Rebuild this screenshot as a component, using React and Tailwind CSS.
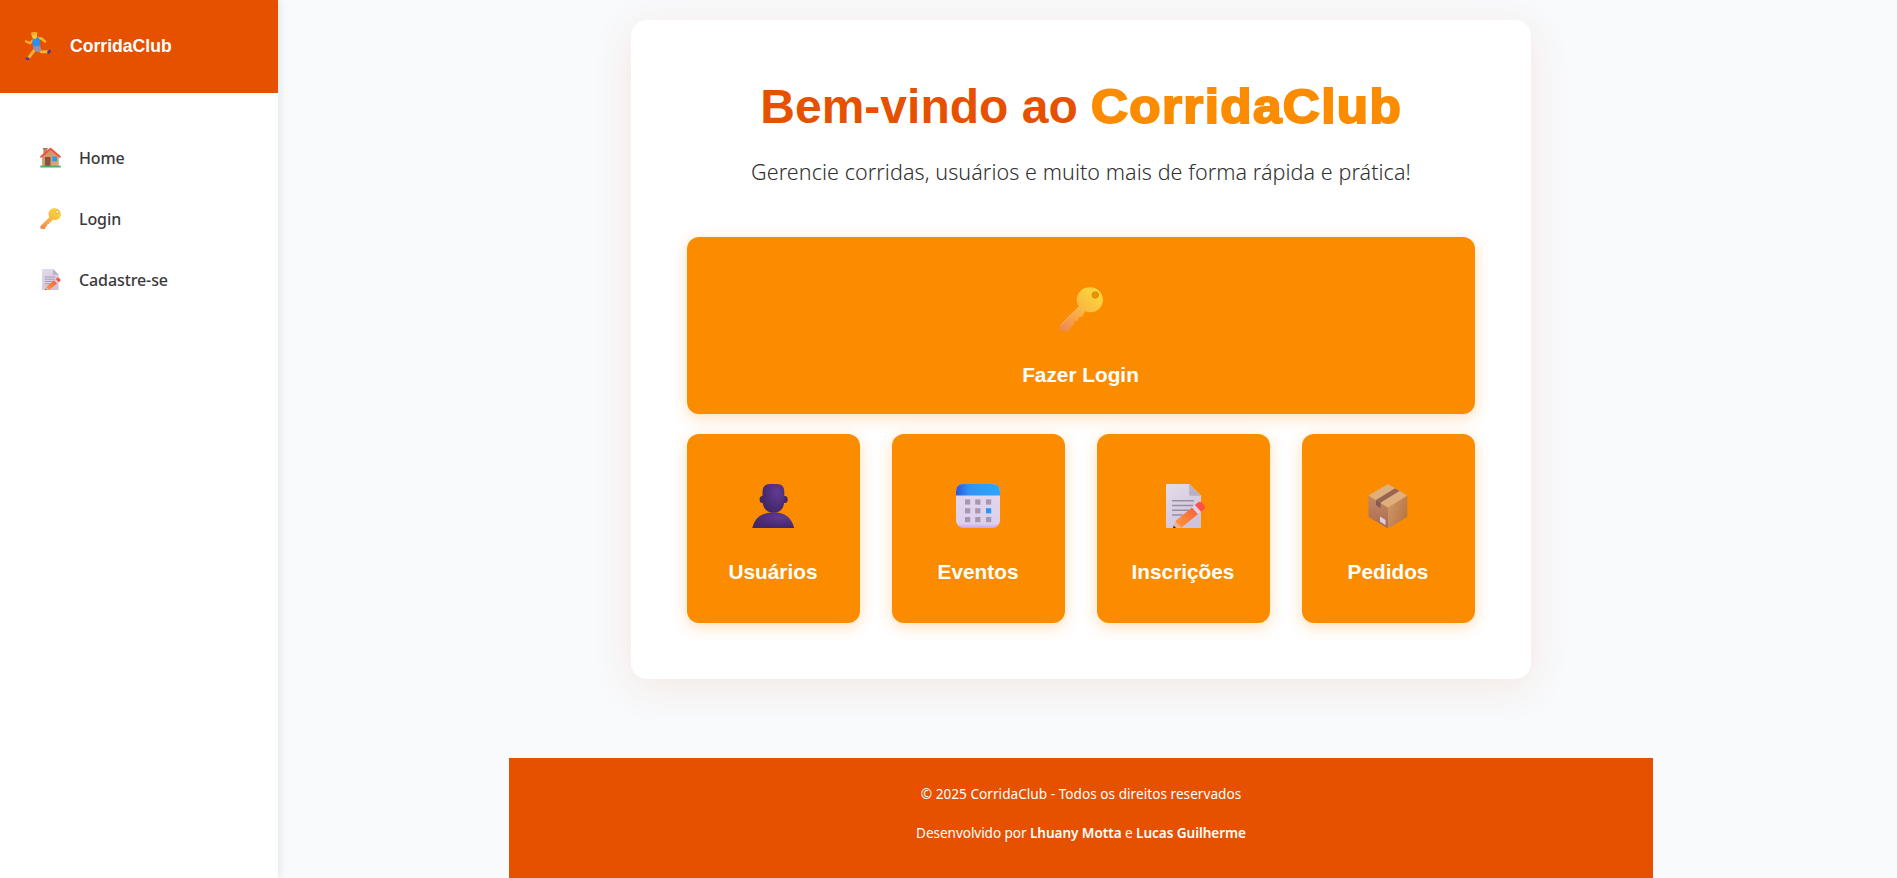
import React from "react";

function KeyIcon({ className, id }) {
  return (
    <svg viewBox="0 0 44 44" className={className} aria-hidden="true">
      <defs>
        <linearGradient id={id} x1="34" y1="8" x2="4" y2="42" gradientUnits="userSpaceOnUse">
          <stop offset="0" stopColor="#fbd03c" />
          <stop offset="0.5" stopColor="#f9b044" />
          <stop offset="1" stopColor="#f08a52" />
        </linearGradient>
      </defs>
      <path
        fillRule="evenodd"
        fill={`url(#${id})`}
        d="M31.500 0.300a12.500 12.500 0 1 1 -5.200 23.900l-3.300 5.600l-3.400 0.700l-0.500 3l-3.400 0.800l-1.300 3.800l-2 1l-1.200 3.200a5 5 0 0 1 -9.800 -5l18.400 -17.800a12.500 12.500 0 0 1 11.700 -19.200zM36.300 5a3 3 0 1 0 0.100 6a3 3 0 0 0 -0.100 -6z"
      />
      <circle cx="36.300" cy="8" r="3.200" fill="none" stroke="#c98a10" strokeWidth="1" />
      <path d="M2 38L20.500 19.800" stroke="#ffd08a" strokeOpacity="0.4" strokeWidth="1" />
    </svg>
  );
}

function NoteIcon({ className, id }) {
  return (
    <svg viewBox="0 0 44 44" className={className} aria-hidden="true">
      <defs>
        <linearGradient id={`${id}-paper`} x1="0" y1="0" x2="0.600" y2="1">
          <stop offset="0" stopColor="#e4dcea" />
          <stop offset="1" stopColor="#cfc3da" />
        </linearGradient>
        <linearGradient id={`${id}-pencil`} x1="0" y1="1" x2="1" y2="0">
          <stop offset="0" stopColor="#ff9a3c" />
          <stop offset="1" stopColor="#f4603a" />
        </linearGradient>
      </defs>
      <path d="M5 0h22.500L39 11.500V43a1 1 0 0 1 -1 1H5a1 1 0 0 1 -1 -1V1a1 1 0 0 1 1 -1z" fill={`url(#${id}-paper)`} />
      <path d="M27.200 0L39 11.800H28.200a1 1 0 0 1 -1 -1z" fill="#b9b0c2" />
      <path d="M10 16.800H32M10 21.500H31M10 26.200H27M10 31H21" stroke="#998da3" strokeWidth="1.500" />
      <path d="M11.500 44L13.500 37L19.500 43.500L18 44z" fill="#e9b58f" />
      <path d="M13.300 37.200L30 23.500L36 30L19.500 43.800z" fill={`url(#${id}-pencil)`} />
      <path d="M30 23.500L33 21L39 27.800L36 30z" fill="#ddd2e6" />
      <path d="M33 21L36 18.400a3 3 0 0 1 4 0.300L42.300 21.500a3 3 0 0 1 -0.300 4L39 27.800z" fill="#ff5148" />
      <path d="M11 44L11.700 41.500L14 44z" fill="#3d2c3c" />
    </svg>
  );
}

function HouseIcon({ className }) {
  return (
    <svg viewBox="0 0 44 44" className={className} aria-hidden="true">
      <defs>
        <linearGradient id="house-wall" x1="0" y1="0" x2="1" y2="1">
          <stop offset="0" stopColor="#c98e62" />
          <stop offset="1" stopColor="#e3a878" />
        </linearGradient>
      </defs>
      <path d="M7 4H15V14H7z" fill="#c08a60" />
      <path d="M6 2H16V5H6z" fill="#a87856" />
      <path d="M4.500 20L22 5L39.500 20V40H4.500z" fill="url(#house-wall)" />
      <path d="M2.500 20.500L22 3.500L41.500 20.500" fill="none" stroke="#ef5340" strokeWidth="4.200" strokeLinecap="round" strokeLinejoin="round" />
      <path d="M10.500 21H22V40H10.500z" fill="#8a5142" />
      <path d="M26 20H35.500V30H26z" fill="#259cf0" />
      <path d="M0.500 39H43.500V43H0.500z" fill="#46b26b" />
    </svg>
  );
}

function RunnerIcon({ className }) {
  return (
    <svg viewBox="0 0 28 28" className={className} aria-hidden="true">
      <path d="M9 8.300L6 11.200L2 9.300" fill="none" stroke="#f9a825" strokeWidth="2.400" strokeLinecap="round" strokeLinejoin="round" />
      <path d="M10.500 18L7.800 21.500L4.600 26" fill="none" stroke="#fbb52c" strokeWidth="2.900" strokeLinecap="round" strokeLinejoin="round" />
      <path d="M15.500 18L17.500 19.900L23.500 19.700" fill="none" stroke="#fbb52c" strokeWidth="2.900" strokeLinecap="round" strokeLinejoin="round" />
      <path d="M14 6L17.800 6.800L21 9.500" fill="none" stroke="#fbb52c" strokeWidth="2.500" strokeLinecap="round" strokeLinejoin="round" />
      <path d="M8.800 13.300L16 13L17.500 19L14.500 20.500L9.300 18z" fill="#9a8fa6" />
      <path d="M9.300 5.800L14.700 5.300L16 9L15.700 14L9.800 14.600L8 10.500z" fill="#2a8ff0" />
      <path d="M7.300 2.200L13 1.800V5a2.500 2.500 0 0 1 -4.600 0.800z" fill="#fcc43a" />
      <path d="M6.800 1.600a2 2 0 0 1 2 -1.600h3.100a1.600 1.600 0 0 1 1.600 1.800l-3.200 0.600l-0.800 1.600l-1.400 -1.200z" fill="#f7a62e" />
      <path d="M1.300 25.600L5 25.400L6 27.900L2.200 27.700z" fill="#47339b" />
      <path d="M23.300 19L26 17.600L27 19.200L25 22L23.400 21.400z" fill="#47339b" />
    </svg>
  );
}

function UserIcon({ className }) {
  return (
    <svg viewBox="0 0 44 44" className={className} aria-hidden="true">
      <defs>
        <radialGradient id="user-fill" cx="0.650" cy="0.300" r="0.700">
          <stop offset="0" stopColor="#613a92" />
          <stop offset="1" stopColor="#432768" />
        </radialGradient>
      </defs>
      <ellipse cx="11.300" cy="15.500" rx="2.700" ry="3.500" fill="#44276a" />
      <ellipse cx="34" cy="15.500" rx="2.700" ry="3.500" fill="#44276a" />
      <path d="M11.500 7.500Q11.500 0 19 0H26Q33.300 0 33.300 7.500V16.500Q33 28.500 22.500 28.800Q12 28.500 11.500 16.500z" fill="url(#user-fill)" />
      <path d="M1.200 44Q5 28.500 22.300 28.300Q39.500 28.500 43.200 44z" fill="url(#user-fill)" />
    </svg>
  );
}

function CalendarIcon({ className }) {
  const columns = [9, 19.2, 30];
  const rows = [15.4, 24.2, 33];
  return (
    <svg viewBox="0 0 44 44" className={className} aria-hidden="true">
      <defs>
        <linearGradient id="calendar-top" x1="0" y1="0" x2="1" y2="0">
          <stop offset="0" stopColor="#2f55dc" />
          <stop offset="0.300" stopColor="#2f93f8" />
          <stop offset="1" stopColor="#2fa5fc" />
        </linearGradient>
        <linearGradient id="calendar-body" x1="0" y1="0" x2="0" y2="1">
          <stop offset="0" stopColor="#e3d9ee" />
          <stop offset="0.900" stopColor="#ddcfeb" />
          <stop offset="1" stopColor="#c9a2f0" />
        </linearGradient>
      </defs>
      <rect width="44" height="44" rx="7.500" fill="url(#calendar-body)" />
      <path d="M0 11.500V7.500Q0 0 7.500 0H36.500Q44 0 44 7.500V11.500z" fill="url(#calendar-top)" />
      {rows.map((y) =>
        columns.map((x) => (
          <rect key={`${x}-${y}`} x={x} y={y} width="5.200" height="5.200" fill={x === 30 && y === 24.2 ? "#2b97f5" : "#a398b0"} />
        ))
      )}
    </svg>
  );
}

function BoxIcon({ className }) {
  return (
    <svg viewBox="0 0 44 44" className={className} aria-hidden="true">
      <defs>
        <linearGradient id="box-left" x1="0" y1="0" x2="0" y2="1">
          <stop offset="0" stopColor="#c48a62" />
          <stop offset="1" stopColor="#a96a54" />
        </linearGradient>
        <linearGradient id="box-right" x1="0" y1="0" x2="1" y2="0.600">
          <stop offset="0" stopColor="#d19a6c" />
          <stop offset="1" stopColor="#b87544" />
        </linearGradient>
      </defs>
      <path d="M2.500 11.500L22 23.500V44.500L2.500 33z" fill="url(#box-left)" />
      <path d="M41.300 11.500L22 23.500V44.500L41.300 33z" fill="url(#box-right)" />
      <path d="M22 0L41.300 11.500L22 23.500L2.500 11.500z" fill="#dfb07e" />
      <path d="M29 4.200L33.500 7L14.500 18.700L10 16z" fill="#986553" />
      <path d="M10 16L14.500 18.700V24L10 21.300z" fill="#85594e" />
      <path d="M14 32.500L19.500 36V41L14 37.500z" fill="#dccfe2" />
    </svg>
  );
}

const navItems = [
  { label: "Home", icon: <HouseIcon className="size-[21px]" /> },
  { label: "Login", icon: <KeyIcon id="nav-key" className="size-[21px]" /> },
  { label: "Cadastre-se", icon: <NoteIcon id="nav-note" className="size-[21px]" /> },
];

const cards = [
  { label: "Usuários", icon: <UserIcon className="mr-px size-11" /> },
  { label: "Eventos", icon: <CalendarIcon className="mr-px size-11" /> },
  { label: "Inscrições", icon: <NoteIcon id="card-note" className="size-11" /> },
  { label: "Pedidos", icon: <BoxIcon className="mr-px size-11" /> },
];

function Sidebar() {
  return (
    <aside className="relative z-10 w-[278px] shrink-0 bg-white shadow-[2px_0_8px_rgba(0,0,0,0.08)]">
      <div className="flex h-[93px] items-center bg-[#e65100] pb-0.5 pl-6">
        <RunnerIcon className="size-7" />
        <span className="ml-[18px] font-['Liberation_Sans',sans-serif] text-[17.600px] leading-6 font-bold text-white">
          CorridaClub
        </span>
      </div>
      <nav className="flex flex-col pt-[34px] pl-10">
        {navItems.map((item) => (
          <a key={item.label} className="flex h-[61px] items-center">
            {item.icon}
            <span className="ml-[18px] text-[16px] leading-6 font-medium tracking-[-0.100px] text-[#3a3a3a]">{item.label}</span>
          </a>
        ))}
      </nav>
    </aside>
  );
}

export default function App() {
  return (
    <div className="flex h-[878px] overflow-hidden bg-[#f8fafc] font-['Noto_Sans','Open_Sans',sans-serif]">
      <Sidebar />
      <div className="flex flex-1 flex-col items-center pt-5 pr-[13px]">
        <main className="flex h-[659px] w-[900px] shrink-0 flex-col items-center rounded-2xl bg-white px-14 pt-[57px] shadow-[0_8px_40px_rgba(230,81,0,0.11)]">
          <h1 className="flex h-[60px] items-center font-['Liberation_Sans',sans-serif] text-[48px] leading-[60px] font-bold whitespace-pre text-[#e65100]">
            {"Bem-vindo ao "}
            <span className="mr-[19px] inline-block origin-left scale-x-[1.067] tracking-[1.300px] text-[#fb8c00] [-webkit-text-stroke:2px_#fb8c00]">
              CorridaClub
            </span>
          </h1>
          <p className="mt-[19px] h-8 text-[21.500px] leading-8 font-light tracking-[0.080px] whitespace-nowrap text-[#2f2f2f]">
            Gerencie corridas, usuários e muito mais de forma rápida e prática!
          </p>
          <div className="mt-[49px] flex h-[177px] w-full shrink-0 flex-col items-center rounded-xl bg-[#fb8c00] pt-[50px] shadow-[0_4px_16px_rgba(251,140,0,0.28)]">
            <KeyIcon id="hero-key" className="mr-px size-11" />
            <span className="mt-[32px] mr-px font-['Liberation_Sans',sans-serif] text-[20.800px] leading-6 font-bold text-white">Fazer Login</span>
          </div>
          <div className="mt-5 grid w-full grid-cols-4 gap-8">
            {cards.map((card) => (
              <div key={card.label} className="flex h-[189px] flex-col items-center rounded-xl bg-[#fb8c00] pt-[50px] shadow-[0_4px_16px_rgba(251,140,0,0.28)]">
                {card.icon}
                <span className="mt-[32px] mr-px font-['Liberation_Sans',sans-serif] text-[20.800px] leading-6 font-bold text-white">{card.label}</span>
              </div>
            ))}
          </div>
        </main>
        <footer className="mt-[79px] flex h-[120px] w-[1144px] shrink-0 flex-col items-center bg-[#e65100] pt-[26px] text-[13.600px] text-white">
          <p className="leading-5 tracking-[0.030px]">© 2025 CorridaClub - Todos os direitos reservados</p>
          <p className="mt-[19px] leading-5 tracking-[-0.070px]">
            Desenvolvido por <strong className="font-semibold">Lhuany Motta</strong> e <strong className="font-semibold">Lucas Guilherme</strong>
          </p>
        </footer>
      </div>
    </div>
  );
}
